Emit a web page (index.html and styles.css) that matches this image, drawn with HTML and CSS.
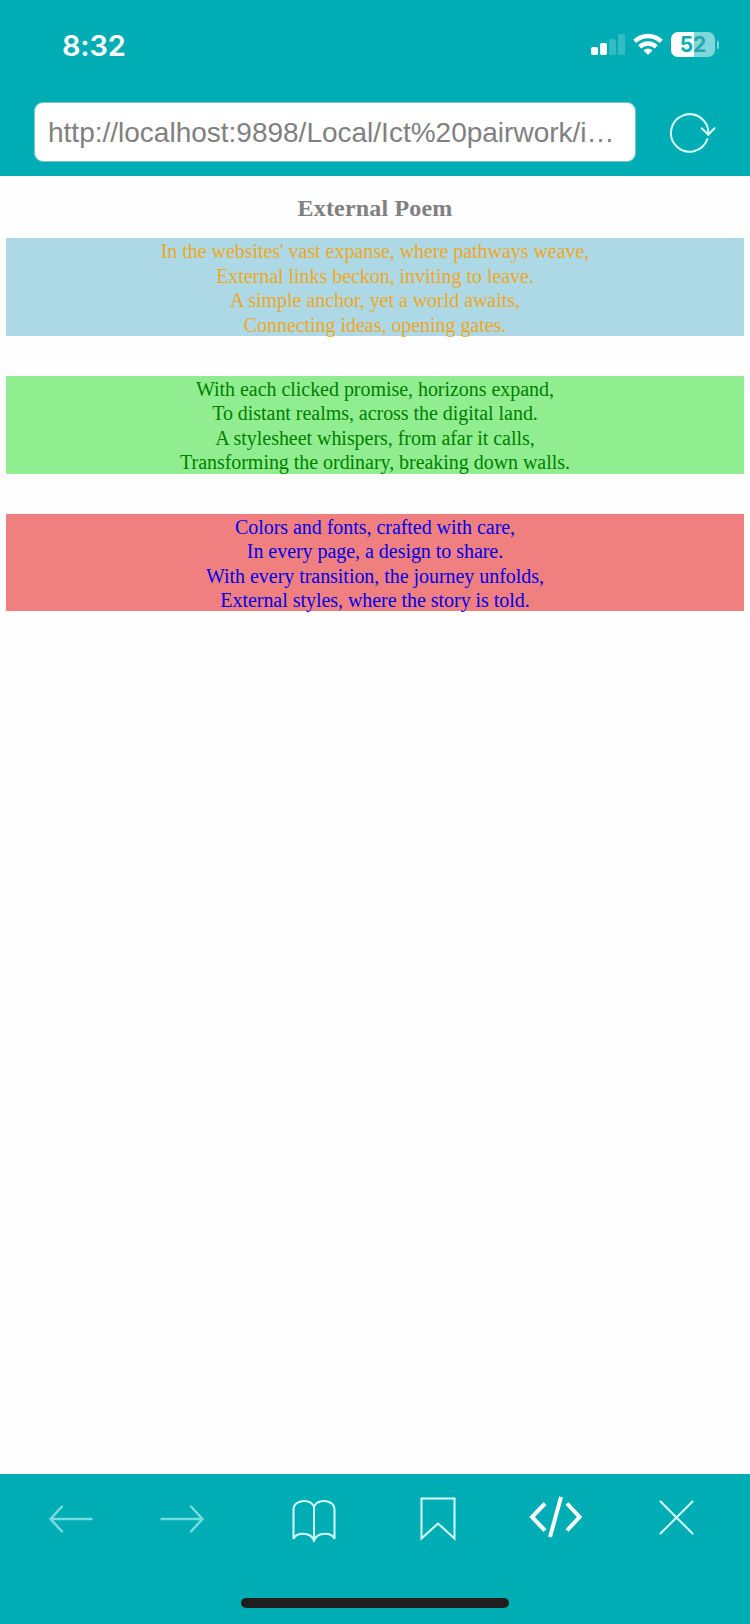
FILE: index.html
```html
<!DOCTYPE html>
<html lang="en">
<head>
<meta charset="utf-8">
<title>External Poem</title>
<link rel="stylesheet" href="styles.css">
</head>
<body>
<header class="header">
  <div class="status">
    <span class="time">8:32</span>
    <div class="indicators">
      <svg class="signal" width="34" height="22" viewBox="0 0 34 22" fill="#fff">
        <rect x="0" y="14" width="7" height="8" rx="1.8"/>
        <rect x="9" y="10" width="7" height="12" rx="1.8"/>
        <rect x="18" y="6" width="7" height="16" rx="1.8" opacity=".2"/>
        <rect x="27" y="1" width="7" height="21" rx="1.8" opacity=".2"/>
      </svg>
      <svg class="wifi" width="30" height="22" viewBox="0 0 30 22">
        <g fill="none" stroke="#fff" stroke-width="4.4">
          <path d="M1.700 8.400a19 19 0 0 1 26.600 0"/>
          <path d="M6.700 13.800a12 12 0 0 1 16.600 0"/>
        </g>
        <path d="M10.500 17.400a6.500 6.500 0 0 1 9 0L15 22z" fill="#fff"/>
      </svg>
      <div class="battery"><span class="level"><span class="digit-on">5</span><span class="digit-off">2</span></span><span class="nub"></span></div>
    </div>
  </div>
  <div class="address-row">
    <div class="address">http://localhost:9898/Local/Ict%20pairwork/i…</div>
    <svg class="reload" width="46" height="42" viewBox="0 0 46 42" fill="none" stroke="#d8ffff" stroke-width="2" stroke-linecap="round">
      <path d="M37.300 26.200A18.700 18.700 0 1 1 38.300 21.600"/>
      <path d="M31.700 15.200l6.600 6.400 6.200-6.400"/>
    </svg>
  </div>
</header>
<main class="page">
  <h1 class="title">External Poem</h1>
  <p class="stanza first"><span>In the websites' vast expanse, where pathways weave,</span><span>External links beckon, inviting to leave.</span><span>A simple anchor, yet a world awaits,</span><span>Connecting ideas, opening gates.</span></p>
  <p class="stanza second"><span>With each clicked promise, horizons expand,</span><span>To distant realms, across the digital land.</span><span>A stylesheet whispers, from afar it calls,</span><span>Transforming the ordinary, breaking down walls.</span></p>
  <p class="stanza third"><span>Colors and fonts, crafted with care,</span><span>In every page, a design to share.</span><span>With every transition, the journey unfolds,</span><span>External styles, where the story is told.</span></p>
</main>
<footer class="toolbar">
  <nav class="tools">
    <svg class="faded" width="44" height="28" viewBox="0 0 44 28"><path d="M13 1.500L1.500 14 13 26.500M1.500 14H42.500"/></svg>
    <svg class="faded" width="44" height="28" viewBox="0 0 44 28"><path d="M31 1.500L42.500 14 31 26.500M42.500 14H1.500"/></svg>
    <svg class="book" width="44" height="44" viewBox="0 0 44 44"><path d="M22 6.500C20 2.500 16 1 12 1S1.500 3 1.500 9.500V39C4 32.500 18 31 22 40.500C26 31 40 32.500 42.500 39V9.500C42.500 3 36 1 32 1S24 2.500 22 6.500V40.500"/></svg>
    <svg class="mark" width="36" height="45" viewBox="0 0 36 45"><path d="M1.500 1.500H34.500V41.500L18 26.500 1.500 41.500z"/></svg>
    <svg class="code" width="58" height="42" viewBox="0 0 58 42"><path d="M18 7.500L5 21 18 34.500M34 1L23 41M40 7.500L52.500 21 40 34.500"/></svg>
    <svg class="close" width="36" height="36" viewBox="0 0 36 36"><path d="M1.500 1.500l32 32M33.500 1.500l-32 32"/></svg>
  </nav>
  <div class="home"></div>
</footer>
</body>
</html>
```
FILE: styles.css
```css
* { box-sizing: border-box; }
body {
  margin: 0;
  width: 750px;
  height: 1624px;
  display: flex;
  flex-direction: column;
  background: #fefefe;
  overflow: hidden;
}
.header { height: 176px; background: #00adb5; flex: none; }
.status {
  height: 102px;
  padding: 31px 31px 0 62px;
  display: flex;
  justify-content: space-between;
  align-items: flex-start;
}
.time {
  font: 600 29px/30px Inter, sans-serif;
  letter-spacing: -.2px;
  color: #fff;
}
.indicators { display: flex; align-items: flex-start; padding-top: 1px; }
.signal { margin-top: 1px; }
.wifi { margin: 1px 8px 0 8px; }
.battery { display: flex; align-items: center; gap: 2px; }
.level {
  width: 44px;
  height: 25px;
  border-radius: 7px;
  background: linear-gradient(90deg, #fff 23px, #80d6da 23px);
  display: flex;
  justify-content: center;
  font: 700 21px/25px Inter, sans-serif;
}
.digit-on { color: #00adb5; }
.digit-off { color: #2ba5ac; }
.nub { width: 2px; height: 8px; border-radius: 0 3px 3px 0; background: #80d6da; }
.address-row { display: flex; align-items: center; padding-left: 34px; height: 60px; }
.address {
  width: 602px;
  height: 60px;
  border: 1px solid #74c5ca;
  border-radius: 9px;
  background: #fff;
  padding: 0 13px;
  color: #808080;
  font: 28px/59px "Liberation Sans", Arial, sans-serif;
  white-space: nowrap;
}
.reload { margin: 4px 0 0 34px; }
.page { flex: 1; padding: 0 6px; font-family: "Liberation Serif", "Times New Roman", serif; text-align: center; }
.title {
  margin: 0;
  padding-top: 18px;
  height: 62px;
  font-size: 24px;
  line-height: 28px;
  letter-spacing: .18px;
  color: #808080;
}
.stanza { margin: 0 0 40px; height: 97.8px; padding-top: 1.2px; font-size: 20px; line-height: 24.45px; letter-spacing: -.04px; }
.stanza span { display: block; }
.first { background: #add8e6; color: #f0a823; }
.second { background: #90ee90; color: #008000; }
.third { background: #f08080; color: #0000e8; }
.toolbar { height: 150px; background: #00adb5; flex: none; }
.tools {
  display: grid;
  grid-template-columns: 111px 132px 128px 107px 132px 36px;
  padding: 22px 0 0 49px;
  height: 124px;
  align-items: start;
}
.tools svg { fill: none; stroke: #d8ffff; stroke-width: 2; stroke-linecap: round; }
.tools .faded { stroke: #75dce0; stroke-width: 2.4; margin-top: 9px; }
.tools .book { margin-top: 4px; }
.tools .mark { margin-top: 1px; }
.tools .close { margin-top: 4px; }
.tools .code { stroke: #fff; stroke-width: 4; stroke-linecap: butt; }
.home { width: 268px; height: 10px; margin: 0 auto; border-radius: 5px; background: #1e1e1e; }
```
